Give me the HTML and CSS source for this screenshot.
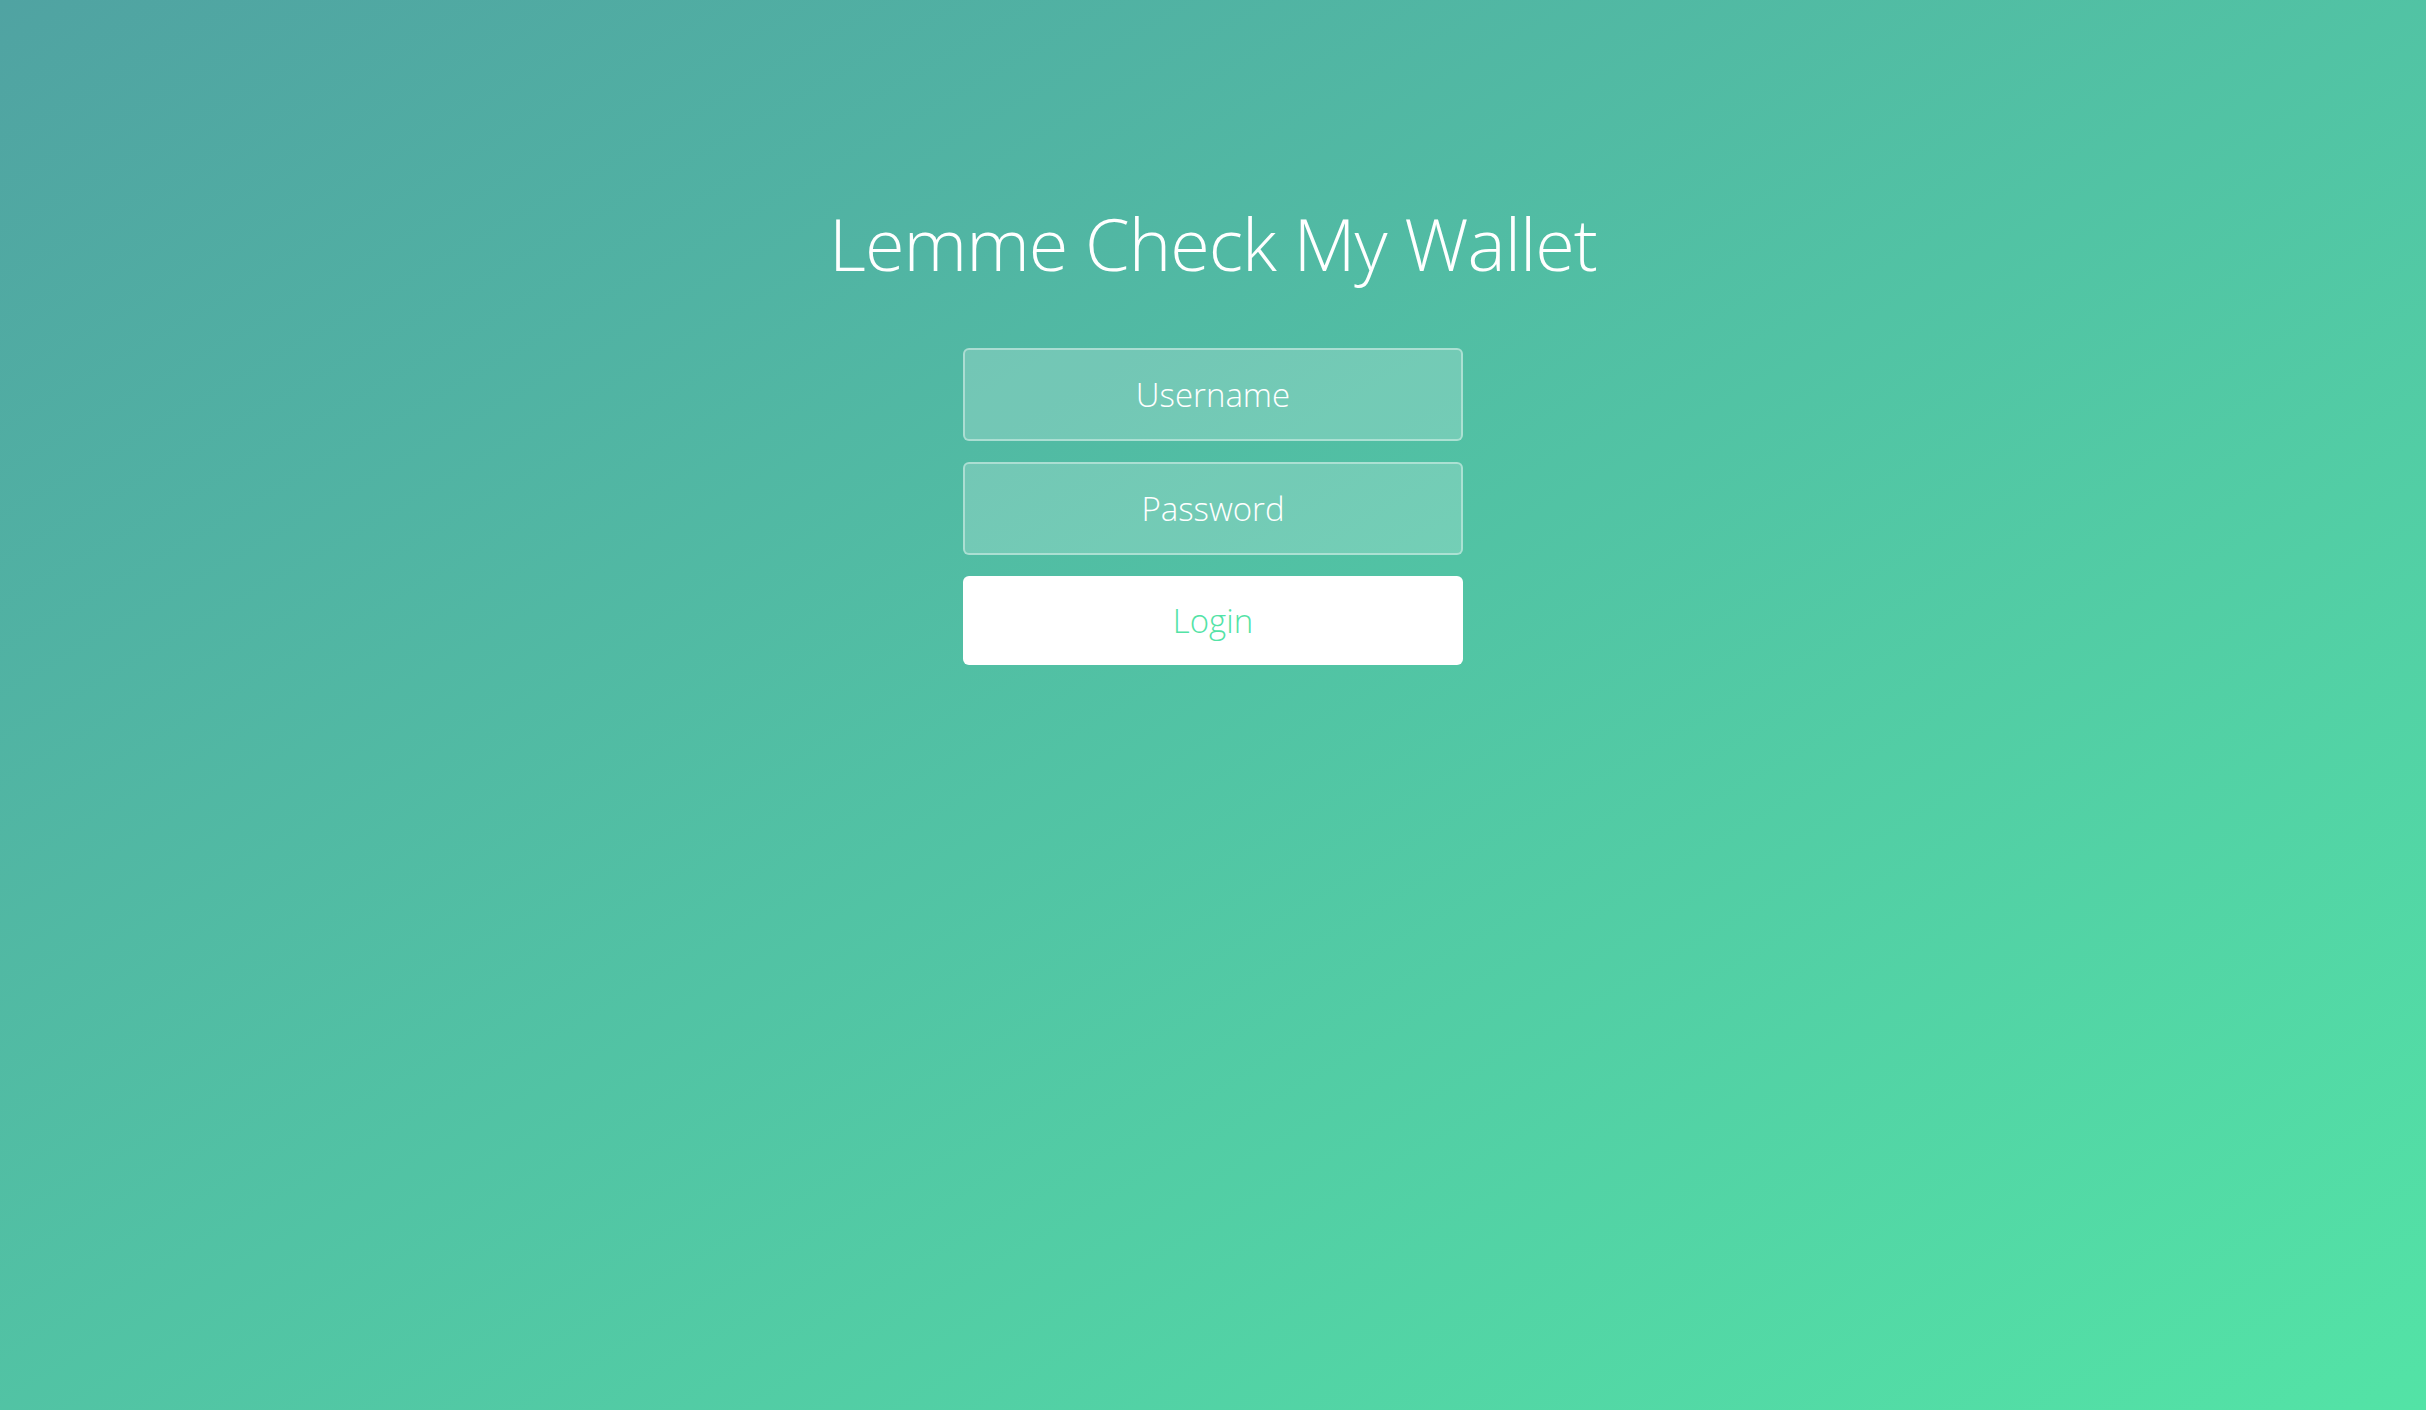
FILE: index.html
```html
<!DOCTYPE html>
<html lang="en">
<head>
<meta charset="utf-8">
<title>Lemme Check My Wallet</title>
<link rel="stylesheet" href="styles.css">
</head>
<body>
<div class="wrapper">
  <div class="container">
    <h1 class="title">Lemme Check My Wallet</h1>
    <form class="form">
      <input class="field" type="text" placeholder="Username">
      <input class="field" type="password" placeholder="Password">
      <button class="login" type="button">Login</button>
    </form>
  </div>
</div>
</body>
</html>
```
FILE: styles.css
```css
* { box-sizing: border-box; }
html, body { margin: 0; padding: 0; height: 100%; }
body {
  font-family: "Open Sans", "Noto Sans", sans-serif;
  font-weight: 300;
  color: #fff;
}
.wrapper {
  width: 100%;
  height: 100%;
  background: linear-gradient(to bottom right, #50a3a2 0%, #53e3a6 100%);
  overflow: hidden;
}
.container {
  width: 1200px;
  margin: 0 auto;
  padding-top: 198px;
  text-align: center;
}
.title {
  margin: 0;
  font-size: 72px;
  font-weight: 300;
  line-height: 90px;
  letter-spacing: -1px;
  white-space: nowrap;
}
.form {
  display: flex;
  flex-direction: column;
  align-items: center;
  gap: 21px;
  padding-top: 60px;
}
.field {
  appearance: none;
  outline: 0;
  width: 500px;
  height: 93px;
  border: 2px solid rgba(255, 255, 255, 0.4);
  background-color: rgba(255, 255, 255, 0.2);
  border-radius: 6px;
  padding: 0 30px;
  text-align: center;
  font-family: "Open Sans", "Noto Sans", sans-serif;
  font-size: 33px;
  font-weight: 300;
  color: #fff;
}
.field::placeholder { color: #fff; opacity: 1; }
.login {
  appearance: none;
  outline: 0;
  width: 500px;
  height: 89px;
  border: 0;
  border-radius: 6px;
  background: #fff;
  color: #53e3a6;
  font-family: "Open Sans", "Noto Sans", sans-serif;
  font-size: 33px;
  font-weight: 300;
  cursor: pointer;
}
```
